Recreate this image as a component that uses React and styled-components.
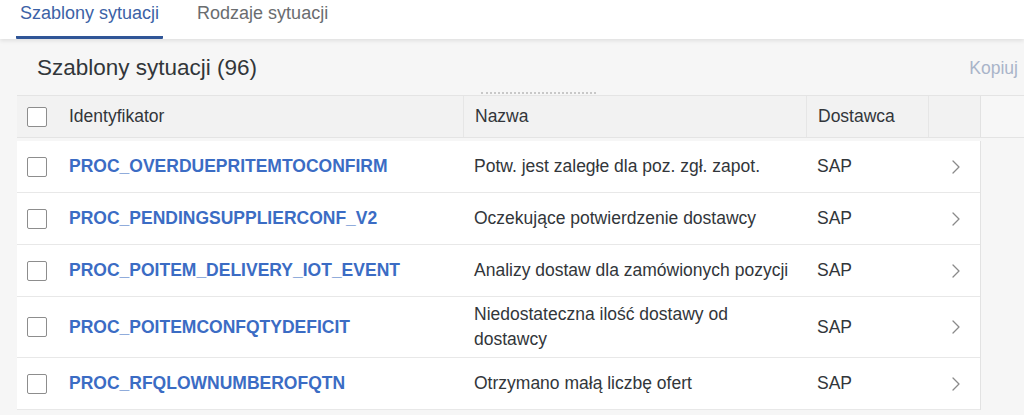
import styled, { createGlobalStyle } from "styled-components";

const GlobalStyle = createGlobalStyle`
  html, body {
    margin: 0;
    padding: 0;
    background: #f6f6f6;
    font-family: "Liberation Sans", Arial, sans-serif;
    color: #32363a;
  }
  * { box-sizing: border-box; }
`;

const rows = [
  { id: "PROC_OVERDUEPRITEMTOCONFIRM", name: "Potw. jest zaległe dla poz. zgł. zapot.", vendor: "SAP" },
  { id: "PROC_PENDINGSUPPLIERCONF_V2", name: "Oczekujące potwierdzenie dostawcy", vendor: "SAP" },
  { id: "PROC_POITEM_DELIVERY_IOT_EVENT", name: "Analizy dostaw dla zamówionych pozycji", vendor: "SAP" },
  { id: "PROC_POITEMCONFQTYDEFICIT", name: "Niedostateczna ilość dostawy od dostawcy", vendor: "SAP" },
  { id: "PROC_RFQLOWNUMBEROFQTN", name: "Otrzymano małą liczbę ofert", vendor: "SAP" },
];

const COLUMNS = "41px 405px 343px 122px 52px 1fr";

const App = () => {
  return (
    <Page>
      <GlobalStyle />
      <TabBar>
        <Tab active>Szablony sytuacji</Tab>
        <Tab>Rodzaje sytuacji</Tab>
      </TabBar>
      <Toolbar>
        <Title>Szablony sytuacji (96)</Title>
        <ToolButton>Kopiuj</ToolButton>
      </Toolbar>
      <Table>
        <HeadRow>
          <HeadCell>
            <Checkbox />
          </HeadCell>
          <HeadCell>Identyfikator</HeadCell>
          <HeadCell divider>
            <Ghost />
            Nazwa
          </HeadCell>
          <HeadCell divider>Dostawca</HeadCell>
          <HeadCell divider />
          <FillerHead />
        </HeadRow>
        <Body>
          {rows.map((row) => (
            <Row key={row.id}>
              <Cell>
                <Checkbox />
              </Cell>
              <Cell>
                <IdLink>{row.id}</IdLink>
              </Cell>
              <Cell>
                <NameText>{row.name}</NameText>
              </Cell>
              <Cell>{row.vendor}</Cell>
              <NavCell>
                <svg width="24" height="24" viewBox="0 0 24 24" fill="none">
                  <path d="M9 6l6 6-6 6" stroke="#8a8a8a" strokeWidth="1.3" strokeLinecap="round" strokeLinejoin="round" />
                </svg>
              </NavCell>
              <Filler />
            </Row>
          ))}
        </Body>
      </Table>
    </Page>
  );
};

const Page = styled.div`
  width: 1024px;
  height: 415px;
  overflow: hidden;
  background: #f6f6f6;
`;

const TabBar = styled.div`
  display: flex;
  gap: 30px;
  height: 39px;
  padding-left: 16px;
  background: #fff;
  box-shadow: 0 2px 4px rgba(0, 0, 0, 0.09);
  position: relative;
  z-index: 1;
`;

const Tab = styled.div`
  display: flex;
  align-items: flex-start;
  padding: 3px 4px 0;
  font-size: 18px;
  line-height: 20px;
  color: ${({ active }) => (active ? "#3c62a6" : "#6a6d70")};
  border-bottom: 3px solid ${({ active }) => (active ? "#2f5597" : "transparent")};
  border-radius: 0 0 1px 1px;
`;

const Toolbar = styled.div`
  display: flex;
  align-items: center;
  justify-content: space-between;
  height: 56px;
  padding: 2px 6px 0 37px;
`;

const Title = styled.h1`
  margin: 0;
  font-size: 22.5px;
  font-weight: normal;
  color: #32363a;
`;

const ToolButton = styled.span`
  font-size: 17.5px;
  color: #a9b4c9;
`;

const Table = styled.div`
  margin-left: 17px;
  border-top: 1px solid #e4e4e4;
`;

const HeadRow = styled.div`
  display: grid;
  grid-template-columns: ${COLUMNS};
  height: 42px;
  border-bottom: 1px solid #e4e4e4;
`;

const HeadCell = styled.div`
  position: relative;
  display: flex;
  align-items: center;
  padding: 0 11px;
  background: #f2f2f2;
  font-size: 17.5px;
  color: #32363a;
  border-left: ${({ divider }) => (divider ? "1px solid #e6e6e6" : "none")};
`;

const Ghost = styled.span`
  position: absolute;
  top: -4px;
  left: 17px;
  width: 115px;
  border-top: 2px dotted #c8c8c8;
`;

const FillerHead = styled.div`
  background: #f7f7f7;
  border-left: 1px solid #e2e2e2;
`;

const Body = styled.div`
  padding-top: 3px;
`;

const Row = styled.div`
  display: grid;
  grid-template-columns: ${COLUMNS};
  min-height: 52px;
`;

const Cell = styled.div`
  display: flex;
  align-items: center;
  padding: 5px 11px;
  background: #fff;
  border-bottom: 1px solid #e8e8e8;
  font-size: 17.5px;
  line-height: 25px;
  color: #32363a;
`;

const NavCell = styled(Cell)`
  justify-content: center;
  padding: 0 0 0 3px;
`;

const Filler = styled.div`
  border-left: 1px solid #e2e2e2;
`;

const Checkbox = styled.span`
  display: block;
  width: 20px;
  height: 20px;
  margin-left: -1px;
  border: 1px solid #8d8d8d;
  border-radius: 2px;
  background: #fff;
`;

const IdLink = styled.span`
  font-weight: bold;
  font-size: 17.5px;
  color: #3b6cc4;
`;

const NameText = styled.span`
  display: block;
  padding-right: 6px;
`;

export default App;
